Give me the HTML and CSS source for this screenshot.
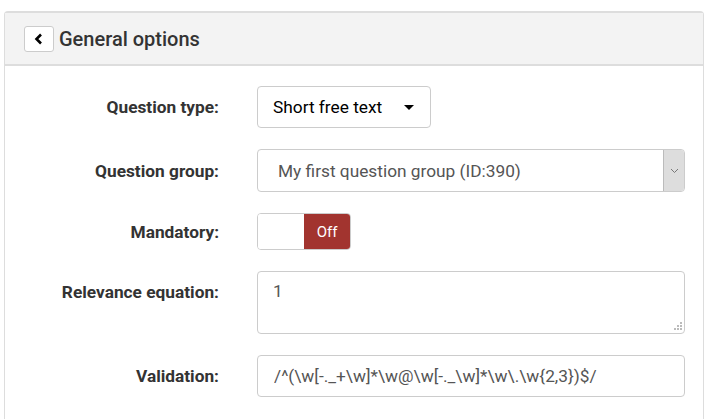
FILE: index.html
```html
<!DOCTYPE html>
<html lang="en">
<head>
    <meta charset="UTF-8">
    <title>General options</title>
    <link rel="stylesheet" href="styles.css">
</head>
<body>
    <div class="panel">
        <div class="panel-heading">
            <button class="back-btn" aria-label="Back">
                <svg width="10" height="12" viewBox="0 0 10 12"><path d="M7 1.5 L2.5 6 L7 10.5" fill="none" stroke="#000" stroke-width="2.6"/></svg>
            </button>
            <h3>General options</h3>
        </div>
        <div class="panel-body">
            <div class="form-row">
                <label>Question type:</label>
                <div>
                    <button class="dropdown-btn">Short free text <span class="caret"></span></button>
                </div>
            </div>
            <div class="form-row">
                <label>Question group:</label>
                <div class="select">
                    <span class="select-text">My first question group (ID:390)</span>
                    <span class="select-arrow">
                        <svg width="9" height="6" viewBox="0 0 9 6"><path d="M1 1 L4.5 4.5 L8 1" fill="none" stroke="#777" stroke-width="1"/></svg>
                    </span>
                </div>
            </div>
            <div class="form-row">
                <label>Mandatory:</label>
                <div class="toggle">
                    <span class="toggle-on"></span>
                    <span class="toggle-off">Off</span>
                </div>
            </div>
            <div class="form-row top">
                <label>Relevance equation:</label>
                <div class="textarea-wrap">
                    <textarea class="textarea">1</textarea>
                    <svg class="grip" width="8" height="8" viewBox="0 0 8 8" fill="#bbb">
                        <rect x="6" y="0" width="2" height="2"/>
                        <rect x="3" y="3" width="2" height="2"/><rect x="6" y="3" width="2" height="2"/>
                        <rect x="0" y="6" width="2" height="2"/><rect x="3" y="6" width="2" height="2"/><rect x="6" y="6" width="2" height="2"/>
                    </svg>
                </div>
            </div>
            <div class="form-row">
                <label>Validation:</label>
                <input class="input" type="text" value="/^(\w[-._+\w]*\w@\w[-._\w]*\w\.\w{2,3})$/">
            </div>
        </div>
    </div>
</body>
</html>
```

FILE: styles.css
```css
* {
    box-sizing: border-box;
    margin: 0;
    padding: 0;
    font-family: Roboto, 'Liberation Sans', sans-serif;
}

body {
    background: #fff;
    color: #333;
    height: 419px;
    overflow: hidden;
}

.panel {
    width: 700px;
    margin: 11px 0 0 4px;
    border: 1px solid #ddd;
    border-top-width: 2px;
    border-bottom: none;
    border-radius: 4px 4px 0 0;
    height: 420px;
}

.panel-heading {
    display: flex;
    align-items: center;
    height: 53px;
    padding-left: 19px;
    background: #f3f3f3;
    border-bottom: 2px solid #ddd;
}

.back-btn {
    width: 30px;
    height: 26px;
    background: #fff;
    border: 1px solid #ccc;
    border-radius: 3px;
    display: flex;
    align-items: center;
    justify-content: center;
    margin-right: 5px;
}

.panel-heading h3 {
    font-size: 20px;
    font-weight: 500;
    color: #333;
}

.panel-body {
    padding-top: 20px;
}

.form-row {
    display: grid;
    grid-template-columns: 214px 428px;
    column-gap: 38px;
    align-items: center;
    margin-bottom: 21px;
}

.form-row.top {
    align-items: start;
}

.form-row.top label {
    padding-top: 11px;
}

.form-row label {
    text-align: right;
    font-weight: 700;
    font-size: 17.3px;
    color: #333;
}

.dropdown-btn {
    height: 42px;
    width: 174px;
    padding: 0 15px;
    background: #fff;
    border: 1px solid #ccc;
    border-radius: 4px;
    font-size: 17.3px;
    color: #000;
    display: flex;
    align-items: center;
}

.caret {
    display: inline-block;
    margin-left: 22px;
    border-top: 5px solid #000;
    border-left: 5px solid transparent;
    border-right: 5px solid transparent;
}

.select {
    height: 43px;
    border: 1px solid #ccc;
    border-radius: 4px;
    display: flex;
    overflow: hidden;
}

.select-text {
    flex: 1;
    display: flex;
    align-items: center;
    padding-left: 20px;
    font-size: 17.3px;
    color: #555;
}

.select-arrow {
    width: 21px;
    background: #ddd;
    border-left: 1px solid #bbb;
    display: flex;
    align-items: center;
    justify-content: center;
}

.toggle {
    display: flex;
    width: 94px;
    height: 37px;
    border: 1px solid #ccc;
    border-radius: 4px;
    overflow: hidden;
}

.toggle-on {
    width: 46px;
    background: #fff;
}

.toggle-off {
    flex: 1;
    background: #a2342f;
    color: #fff;
    font-size: 15px;
    display: flex;
    align-items: center;
    justify-content: center;
}

.textarea-wrap {
    position: relative;
}

.textarea {
    display: block;
    width: 428px;
    height: 63px;
    border: 1px solid #ccc;
    border-radius: 4px;
    padding: 9px 15px;
    font-size: 17.3px;
    color: #555;
    resize: none;
}

.grip {
    position: absolute;
    right: 3px;
    bottom: 4px;
}

.input {
    height: 42px;
    width: 428px;
    border: 1px solid #ccc;
    border-radius: 4px;
    padding: 0 16px;
    font-size: 17.3px;
    color: #555;
}
```
